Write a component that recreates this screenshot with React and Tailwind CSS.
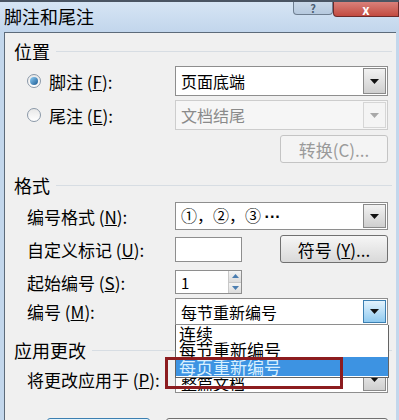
const font = { fontFamily: '"Noto Sans CJK SC", "Noto Sans", sans-serif' };

const Arrow = ({ gray }) => (
  <svg width="9" height="5" viewBox="0 0 9 5">
    <path d="M0 0 L9 0 L4.5 5 Z" fill={gray ? "#a8a8a8" : "#111"} />
  </svg>
);

const DropBtn = ({ hot, gray }) => (
  <div
    className={`w-[23px] self-stretch my-[1px] mr-[1px] flex items-center justify-center border ${
      hot
        ? "border-[#3c7fb1] bg-gradient-to-b from-[#e3f3fd] to-[#8fcaf0]"
        : gray
        ? "border-[#d6d6d6] bg-[#f4f4f4]"
        : "border-[#8a8a8a] bg-gradient-to-b from-[#f2f2f2] to-[#cfcfcf]"
    }`}
  >
    <Arrow gray={gray} />
  </div>
);

const Combo = ({ text, hot, gray, children }) => (
  <div
    className={`w-[213px] h-full flex items-center border ${
      gray ? "border-[#cdcdcd] bg-[#f6f6f6] text-[#8a8a8a]" : "border-[#8e8e8e] bg-white text-black"
    }`}
  >
    <span className="flex-1 pl-[5px] whitespace-nowrap overflow-hidden">{children || text}</span>
    <DropBtn hot={hot} gray={gray} />
  </div>
);

const Header = ({ text, mt }) => (
  <div className={`flex items-center h-[18px] ${mt}`}>
    <span className="pl-[9px] text-[18px] leading-none">{text}</span>
    <div className="flex-1 ml-[6px] mr-[4px] border-t border-[#d7dde3]" />
  </div>
);

const Label = ({ children }) => (
  <div className="w-[170px] pl-[22px] text-[17px] leading-none whitespace-nowrap">{children}</div>
);

const Row = ({ h, mt, children }) => (
  <div className={`flex items-center ${h} ${mt}`}>{children}</div>
);

const Radio = ({ on }) => (
  <div className="w-[14px] h-[14px] rounded-full border border-[#8a98a8] bg-gradient-to-b from-[#e8e8e8] to-white flex items-center justify-center mr-[8px]">
    {on && <div className="w-[8px] h-[8px] rounded-full bg-gradient-to-br from-[#8fd0f7] to-[#1a5c94]" />}
  </div>
);

const Btn = ({ children, gray, w = "w-[108px]" }) => (
  <div
    className={`${w} h-full rounded-[3px] border flex items-center justify-center text-[17px] leading-none ${
      gray
        ? "border-[#c4c4c4] bg-[#f4f4f4] text-[#9a9a9a]"
        : "border-[#707070] bg-gradient-to-b from-[#f6f6f6] to-[#d9d9d9] text-black"
    }`}
  >
    {children}
  </div>
);

export default function App() {
  return (
    <div className="relative w-[399px] h-[420px] overflow-hidden bg-[#c3d7ec] flex flex-col" style={font}>
      {/* title bar */}
      <div className="relative h-[32px] shrink-0 border-t-2 border-[#4a5563] bg-gradient-to-b from-[#d6e5f4] to-[#c2d6ec]">
        <span className="absolute left-[4px] top-[3px] text-[18px] leading-[22px] text-black">脚注和尾注</span>
        <div className="absolute left-[293px] top-0 w-[40px] h-[13px] rounded-b-[4px] border border-t-0 border-[#6e7e90] bg-gradient-to-b from-[#c9d8e8] to-[#b6c9de] flex items-center justify-center text-[11px] leading-none text-[#4c5e72] font-bold">
          ?
        </div>
        <div className="absolute left-[333px] top-0 w-[66px] h-[15px] rounded-bl-[4px] border border-t-0 border-[#6b2a2a] bg-gradient-to-b from-[#d9807a] to-[#c24a40] flex items-center justify-center text-[13px] leading-none font-bold text-white">
          x
        </div>
      </div>

      {/* body */}
      <div className="relative flex-1 ml-[4px] mr-[3px] border-l border-t border-[#5d6b7a] bg-[#f0f0f0] flex flex-col text-black">
        <Header text="位置" mt="mt-[9px]" />
        <Row h="h-[30px]" mt="mt-[6px]">
          <Label>
            <div className="flex items-center">
              <Radio on />
              脚注 (<u>F</u>):
            </div>
          </Label>
          <Combo text="页面底端" />
        </Row>
        <Row h="h-[30px]" mt="mt-[4px]">
          <Label>
            <div className="flex items-center">
              <Radio />
              尾注 (<u>E</u>):
            </div>
          </Label>
          <Combo text="文档结尾" gray />
        </Row>
        <Row h="h-[28px]" mt="mt-[5px]">
          <div className="w-[275px]" />
          <Btn gray>转换(C)...</Btn>
        </Row>

        <Header text="格式" mt="mt-[13px]" />
        <Row h="h-[28px]" mt="mt-[8px]">
          <Label>编号格式 (<u>N</u>):</Label>
          <Combo>
            ①，②，③ <span className="font-['Liberation_Sans'] font-bold text-[16px]">···</span>
          </Combo>
        </Row>
        <Row h="h-[28px]" mt="mt-[5px]">
          <Label>自定义标记 (<u>U</u>):</Label>
          <div className="w-[67px] h-[25px] border border-[#8e8e8e] bg-white" />
          <div className="w-[38px]" />
          <Btn>符号 (<u>Y</u>)...</Btn>
        </Row>
        <Row h="h-[24px]" mt="mt-[7px]">
          <Label>起始编号 (<u>S</u>):</Label>
          <div className="w-[67px] h-full border border-[#8e8e8e] bg-white flex items-center">
            <span className="flex-1 pl-[5px] text-[15px] leading-none">1</span>
            <div className="w-[13px] h-full flex flex-col border-l border-[#c8c8c8]">
              <div className="flex-1 flex items-center justify-center bg-gradient-to-b from-[#f4f4f4] to-[#dcdcdc] border-b border-[#c8c8c8]">
                <svg width="7" height="4" viewBox="0 0 7 4"><path d="M0 4 L7 4 L3.5 0 Z" fill="#4a7db0" /></svg>
              </div>
              <div className="flex-1 flex items-center justify-center bg-gradient-to-b from-[#f4f4f4] to-[#dcdcdc]">
                <svg width="7" height="4" viewBox="0 0 7 4"><path d="M0 0 L7 0 L3.5 4 Z" fill="#4a7db0" /></svg>
              </div>
            </div>
          </div>
        </Row>
        <Row h="h-[27px]" mt="mt-[4px]">
          <Label>编号 (<u>M</u>):</Label>
          <Combo text="每节重新编号" hot />
        </Row>

        <Header text="应用更改" mt="mt-[16px]" />
        <Row h="h-[28px]" mt="mt-[6px]">
          <Label>将更改应用于 (<u>P</u>):</Label>
          <Combo>
            <span className="relative top-[4px]">整篇文档</span>
          </Combo>
        </Row>

        <div className="flex mt-[25px] h-[30px]">
          <div className="w-[42px]" />
          <div className="w-[103px] h-full rounded-[3px] border border-[#3c7fb1] bg-gradient-to-b from-[#e5f4fc] to-[#bfe3f6]" />
          <div className="w-[16px]" />
          <div className="w-[222px] h-full rounded-[3px] border border-[#707070] bg-gradient-to-b from-[#f6f6f6] to-[#e0e0e0]" />
        </div>

        {/* open dropdown list */}
        <div className="absolute left-[170px] top-[292px] w-[214px] h-[53px] border border-[#646464] border-t-0 bg-white text-[17px] leading-none">
          <div className="h-[17px] pl-[3px] flex items-center">连续</div>
          <div className="h-[15px] pl-[3px] flex items-center">每节重新编号</div>
          <div className="h-[19px] pl-[3px] flex items-center bg-[#3d93e2] text-[#d8f0ff]">每页重新编号</div>
        </div>

        {/* red annotation box */}
        <div className="absolute left-[160px] top-[324px] w-[178px] h-[32px] border-[3px] border-[#8c1c1f]" />
      </div>
    </div>
  );
}
